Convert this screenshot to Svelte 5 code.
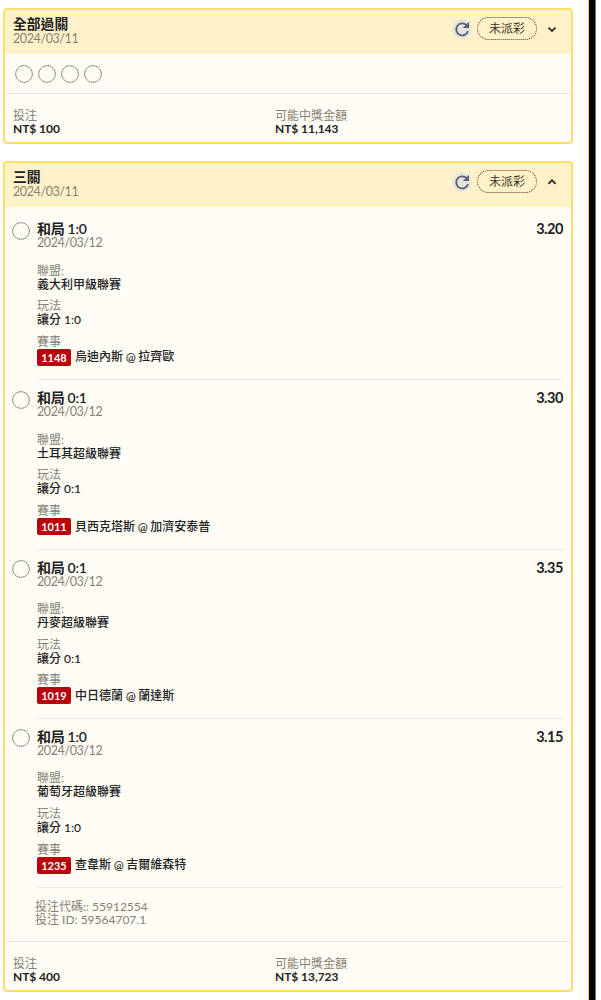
<script>
let bets = $state([
    {
        title: "全部過關", date: "2024/03/11", status: "未派彩", open: false,
        stake: "NT$ 100", payout: "NT$ 11,143", count: 4, legs: []
    },
    {
        title: "三關", date: "2024/03/11", status: "未派彩", open: true,
        stake: "NT$ 400", payout: "NT$ 13,723", code: "55912554", id: "59564707.1",
        legs: [
            {pick: "和局 1:0", date: "2024/03/12", odds: "3.20", league: "義大利甲級聯賽", market: "讓分 1:0", no: "1148", match: "烏迪內斯 @ 拉齊歐"},
            {pick: "和局 0:1", date: "2024/03/12", odds: "3.30", league: "土耳其超級聯賽", market: "讓分 0:1", no: "1011", match: "貝西克塔斯 @ 加濟安泰普"},
            {pick: "和局 0:1", date: "2024/03/12", odds: "3.35", league: "丹麥超級聯賽", market: "讓分 0:1", no: "1019", match: "中日德蘭 @ 蘭達斯"},
            {pick: "和局 1:0", date: "2024/03/12", odds: "3.15", league: "葡萄牙超級聯賽", market: "讓分 1:0", no: "1235", match: "查韋斯 @ 吉爾維森特"}
        ]
    }
])
</script>

{#snippet ring()}
<svg class="ring" viewBox="0 0 18 18"><circle cx="9" cy="9" r="8.3" /></svg>
{/snippet}

<main>
<div class="list">
    {#each bets as bet}
    <section class="card">
        <header>
            <div>
                <h2>{bet.title}</h2>
                <p class="date">{bet.date}</p>
            </div>
            <div class="actions">
                <svg class="refresh" viewBox="0 0 20 20">
                    <circle cx="10" cy="10" r="9.7" fill="#e3e4dc" />
                    <path d="M14.6 6.2A6 6 0 1 0 16 12" fill="none" stroke="#5b6077" stroke-width="1.8" />
                    <path d="M17 2.8V9h-6.2z" fill="#5b6077" />
                </svg>
                <span class="status">{bet.status}</span>
                <button aria-label="toggle" onclick={() => bet.open = !bet.open}>
                    <svg class="chevron" viewBox="0 0 10 10">
                        <path d={bet.open ? "M1.4 6.8L5 3.4l3.6 3.4" : "M1.4 3.6L5 7l3.6-3.4"} />
                    </svg>
                </button>
            </div>
        </header>

        {#if bet.legs.length == 0}
        <div class="rings">
            {#each Array(bet.count) as _}{@render ring()}{/each}
        </div>
        {:else if bet.open}
        <div class="legs">
            {#each bet.legs as leg}
            <article>
                {@render ring()}
                <div class="leg">
                    <div class="pick"><h3>{leg.pick}</h3><strong>{leg.odds}</strong></div>
                    <p class="date">{leg.date}</p>
                    <dl>
                        <dt>聯盟:</dt>
                        <dd>{leg.league}</dd>
                        <dt>玩法</dt>
                        <dd>{leg.market}</dd>
                        <dt>賽事</dt>
                        <dd class="match"><span class="no">{leg.no}</span>{leg.match}</dd>
                    </dl>
                </div>
            </article>
            {/each}
            <div class="ids">
                <p>投注代碼:: {bet.code}</p>
                <p>投注 ID: {bet.id}</p>
            </div>
        </div>
        {/if}

        <footer>
            <div><span>投注</span><b>{bet.stake}</b></div>
            <div><span>可能中獎金額</span><b>{bet.payout}</b></div>
        </footer>
    </section>
    {/each}
</div>
<div class="edge"></div>
</main>

<style>
:global(body) {
    background: #fff;
    overflow: hidden;
}

main {
    display: flex;
    height: 1000px;
    overflow: hidden;
    font-family: Lato, "Noto Sans CJK TC", sans-serif;
    font-size: 12px;
    color: #222;
}

h2, h3, p, dl, dd {
    margin: 0;
}

.list {
    flex: none;
    width: 570px;
    padding: 8px 15px 0 3px;
}

.edge {
    width: 6px;
    background: #080000;
    border-left: 1px solid #e6d83c;
    border-right: 1px solid #777;
}

.card {
    box-sizing: border-box;
    border: 2px solid #f8e065;
    border-radius: 4px;
    background: #fffdf5;
    margin-bottom: 17px;
}

header {
    display: flex;
    justify-content: space-between;
    box-sizing: border-box;
    height: 44px;
    padding: 6px 14px 0 8px;
    background: #fff2c8;
}

h2, h3 {
    font-size: 13.8px;
    font-weight: 600;
    line-height: 16px;
}

h3 {
    font-size: 14px;
    line-height: 15px;
    letter-spacing: -0.3px;
}

strong {
    font-size: 14.5px;
    font-weight: 700;
    line-height: 15px;
    letter-spacing: -0.45px;
}

.date {
    font-size: 12.5px;
    line-height: 14px;
    color: #858176;
    letter-spacing: -0.4px;
}

.actions {
    display: flex;
    align-items: center;
    height: 25px;
}

.refresh {
    width: 20px;
    height: 20px;
    margin-right: 5px;
}

.status {
    box-sizing: border-box;
    width: 60px;
    height: 23px;
    border: 1px dotted #4a4330;
    border-radius: 12px;
    color: #3b3524;
    line-height: 21px;
    text-align: center;
}

button {
    display: flex;
    padding: 0;
    margin-left: 10px;
    border: 0;
    background: none;
}

.chevron {
    width: 10px;
    height: 10px;
    fill: none;
    stroke: #333;
    stroke-width: 1.9;
}

.ring {
    flex: none;
    width: 18px;
    height: 18px;
    fill: none;
    stroke: #444;
    stroke-width: 0.9;
    stroke-dasharray: 1.4 0.6;
}

.rings {
    display: flex;
    gap: 5px;
    padding: 11px 10px 10px;
}

.legs {
    padding-top: 4px;
}

article {
    display: flex;
    padding-left: 7px;
}

article .ring {
    margin: 10.5px 7px 0 0;
}

.leg {
    flex: 1;
    box-sizing: border-box;
    height: 169.3px;
    margin-right: 7px;
    padding-top: 10px;
    border-bottom: 1px solid #edebe4;
}

.pick {
    display: flex;
    justify-content: space-between;
    padding-right: 1px;
}

dl {
    margin-top: 13.5px;
}

dt, .ids, footer span {
    color: #858176;
}

dt {
    line-height: 14px;
}

dd {
    margin-bottom: 8px;
    line-height: 13.6px;
    font-weight: 500;
}

.match {
    display: flex;
    align-items: center;
    height: 17px;
    word-spacing: -0.4px;
}

.no {
    box-sizing: border-box;
    width: 34px;
    margin-right: 4px;
    border-radius: 2px;
    background: #b90009;
    color: #fff;
    font-size: 11px;
    font-weight: 700;
    line-height: 17px;
    text-align: center;
}

.ids {
    height: 41px;
    padding: 12px 0 0 30px;
    line-height: 13.3px;
}

footer {
    display: grid;
    grid-template-columns: 262px 1fr;
    box-sizing: border-box;
    height: 49px;
    padding: 15px 8px 0;
    border-top: 1px solid #e9e7df;
    line-height: 13px;
}

footer span, footer b {
    display: block;
}

footer b {
    font-size: 12px;
    font-weight: 700;
    letter-spacing: -0.05px;
}
</style>
